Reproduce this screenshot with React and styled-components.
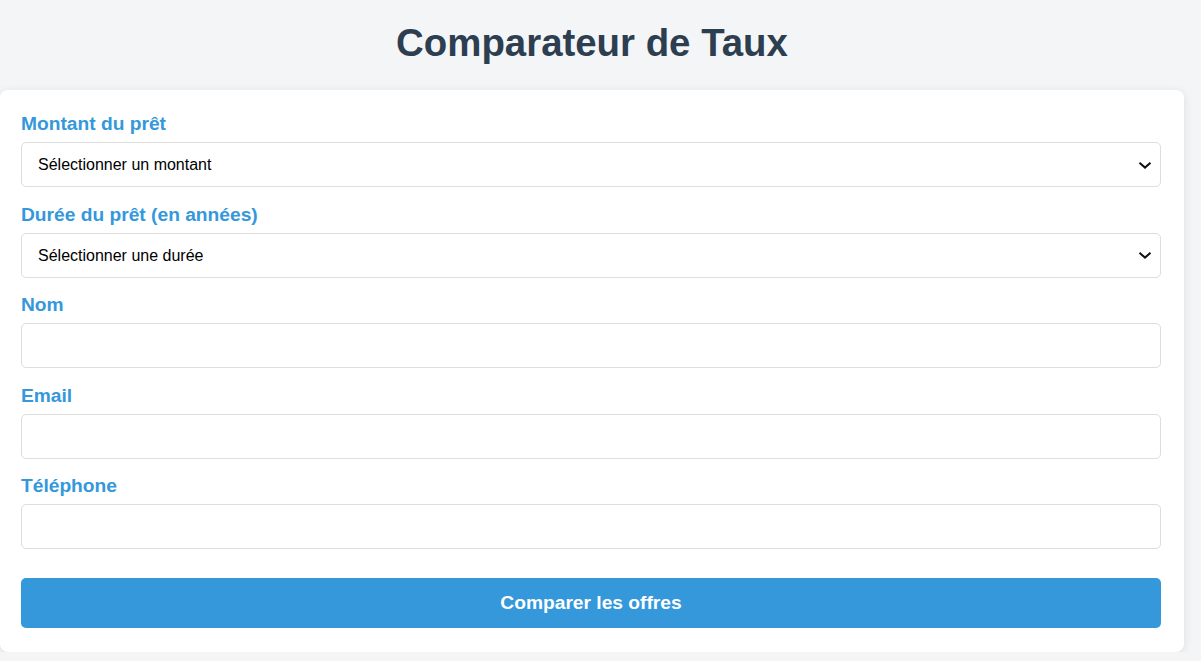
import React, { useState } from "react";
import styled, { createGlobalStyle } from "styled-components";

const GlobalStyle = createGlobalStyle`
  * {
    box-sizing: border-box;
  }

  body {
    margin: 0;
    background-color: #f4f5f7;
    font-family: "Liberation Sans", Arial, sans-serif;
  }
`;

const Page = styled.div`
  width: 1184px;
  padding-top: 21px;
`;

const Title = styled.h1`
  margin: 0 0 25px;
  text-align: center;
  color: #2c3e50;
  font-size: 38.4px;
  font-weight: bold;
  line-height: 44px;
`;

const Card = styled.div`
  background-color: white;
  border-radius: 8px;
  box-shadow: 0 2px 10px rgba(0, 0, 0, 0.1);
  padding: 23px 23px 24px 21px;
`;

const Form = styled.form`
  display: flex;
  flex-direction: column;
`;

const FormGroup = styled.div`
  display: flex;
  flex-direction: column;
  margin-bottom: 16.5px;
`;

const Label = styled.label`
  font-weight: bold;
  font-size: 19.2px;
  line-height: 22px;
  margin-bottom: 7px;
  color: #3498db;
`;

const fieldStyles = `
  width: 100%;
  height: 45px;
  padding: 0 16px;
  border-radius: 5px;
  border: 1px solid #dddddd;
  font-size: 16px;
  font-family: "Liberation Sans", Arial, sans-serif;
  color: #000;
  background-color: white;

  &:focus {
    border-color: #3498db;
    outline: none;
  }
`;

const Input = styled.input`
  ${fieldStyles}
`;

const SelectWrap = styled.div`
  position: relative;
`;

const Select = styled.select`
  ${fieldStyles}
  appearance: none;
  -webkit-appearance: none;
  padding-right: 40px;
`;

const Chevron = styled.svg`
  position: absolute;
  right: 8px;
  top: 50%;
  transform: translateY(-50%);
  pointer-events: none;
`;

const Button = styled.button`
  margin-top: 12.5px;
  height: 50px;
  width: 100%;
  background-color: #3498db;
  color: white;
  border: none;
  border-radius: 5px;
  font-size: 19.2px;
  font-weight: bold;
  font-family: "Liberation Sans", Arial, sans-serif;
  cursor: pointer;

  &:hover {
    background-color: #2980b9;
  }
`;

const SelectField = ({ id, value, onChange, placeholder, options }) => (
  <SelectWrap>
    <Select id={id} name={id} value={value} onChange={onChange}>
      <option value="">{placeholder}</option>
      {options.map((o) => (
        <option key={o.value} value={o.value}>
          {o.label}
        </option>
      ))}
    </Select>
    <Chevron width="16" height="16" viewBox="0 0 16 16">
      <path
        d="M2.5 5.8 L8 10.6 L13.5 5.8"
        fill="none"
        stroke="#111"
        strokeWidth="2"
      />
    </Chevron>
  </SelectWrap>
);

const montants = [
  { value: "10000", label: "10 000 €" },
  { value: "50000", label: "50 000 €" },
  { value: "100000", label: "100 000 €" },
];

const durees = [
  { value: "10", label: "10 ans" },
  { value: "15", label: "15 ans" },
  { value: "20", label: "20 ans" },
];

const App = () => {
  const [formData, setFormData] = useState({
    montant: "",
    duree: "",
    nom: "",
    email: "",
    telephone: "",
  });

  const handleChange = (e) => {
    const { name, value } = e.target;
    setFormData((prev) => ({ ...prev, [name]: value }));
  };

  const handleSubmit = (e) => {
    e.preventDefault();
  };

  return (
    <>
      <GlobalStyle />
      <Page>
        <Title>Comparateur de Taux</Title>
        <Card>
          <Form onSubmit={handleSubmit}>
            <FormGroup>
              <Label htmlFor="montant">Montant du prêt</Label>
              <SelectField
                id="montant"
                value={formData.montant}
                onChange={handleChange}
                placeholder="Sélectionner un montant"
                options={montants}
              />
            </FormGroup>

            <FormGroup>
              <Label htmlFor="duree">Durée du prêt (en années)</Label>
              <SelectField
                id="duree"
                value={formData.duree}
                onChange={handleChange}
                placeholder="Sélectionner une durée"
                options={durees}
              />
            </FormGroup>

            <FormGroup>
              <Label htmlFor="nom">Nom</Label>
              <Input
                type="text"
                id="nom"
                name="nom"
                value={formData.nom}
                onChange={handleChange}
              />
            </FormGroup>

            <FormGroup>
              <Label htmlFor="email">Email</Label>
              <Input
                type="email"
                id="email"
                name="email"
                value={formData.email}
                onChange={handleChange}
              />
            </FormGroup>

            <FormGroup>
              <Label htmlFor="telephone">Téléphone</Label>
              <Input
                type="tel"
                id="telephone"
                name="telephone"
                value={formData.telephone}
                onChange={handleChange}
              />
            </FormGroup>

            <Button type="submit">Comparer les offres</Button>
          </Form>
        </Card>
      </Page>
    </>
  );
};

export default App;
